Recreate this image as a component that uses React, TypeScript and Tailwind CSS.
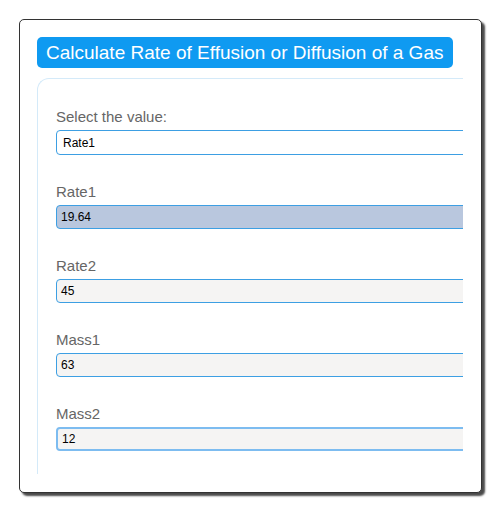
const FIELDS: { label: string; value: string; bg: string; border: string }[] = [
  { label: "Rate1", value: "19.64", bg: "bg-[#b9c7de]", border: "border border-[#3d9fe3]" },
  { label: "Rate2", value: "45", bg: "bg-[#f5f4f3]", border: "border border-[#3d9fe3]" },
  { label: "Mass1", value: "63", bg: "bg-[#f5f4f3]", border: "border border-[#3d9fe3]" },
  { label: "Mass2", value: "12", bg: "bg-[#f5f4f3]", border: "border-2 border-[#7dbcf0]" },
];

const App = () => {
  return (
    <div className="w-[500px] h-[510px] bg-white pt-[19px] pl-[19px] font-['Liberation_Sans',Arial,sans-serif]">
      <div className="w-[463px] h-[474px] border border-[#333] rounded-[5px] bg-white shadow-[3px_3px_2px_#4a4a4a] p-[17px]">
        <div className="w-[426px] h-[437px] overflow-hidden">
          <div className="w-[416px] h-[31px] flex items-center pl-[9px] rounded-[5px] bg-[#0f9af1] text-white text-[19px] leading-none whitespace-nowrap">
            Calculate Rate of Effusion or Diffusion of a Gas
          </div>

          <div className="mt-[10px] w-[480px] h-[400px] border-t border-l border-[#d4eaf9] rounded-tl-[12px] pl-[18px] pt-[29px]">
            <div className="flex flex-col">
              <label className="h-[18px] leading-[18px] text-[15px] text-[#666]">Select the value:</label>
              <div className="mt-[4px] w-[440px] h-[25px] flex items-center pl-[6px] border border-[#3d9fe3] rounded-[4px] bg-white text-[12px] text-black">
                Rate1
              </div>
            </div>

            {FIELDS.map((field) => (
              <div key={field.label} className="flex flex-col mt-[28px]">
                <label className="h-[18px] leading-[18px] text-[15px] text-[#666]">{field.label}</label>
                <div
                  className={`mt-[4px] w-[440px] h-[24px] flex items-center pl-[4px] rounded-[4px] text-[12px] text-black ${field.bg} ${field.border}`}
                >
                  {field.value}
                </div>
              </div>
            ))}
          </div>
        </div>
      </div>
    </div>
  );
};

export default App;
